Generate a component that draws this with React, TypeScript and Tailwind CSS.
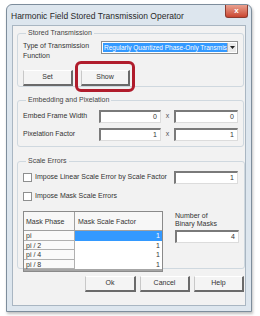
import React from "react";

const font = { fontFamily: '"Liberation Sans", Arial, sans-serif' };

function Btn({ label, className = "" }: { label: string; className?: string }) {
  return (
    <div
      className={
        "h-[16px] flex items-center justify-center text-[7px] text-[#333] bg-[#f4f4f4] border-t border-l border-t-white border-l-[#c8c8c8] border-r-2 border-b-2 border-r-[#6a6a6a] border-b-[#6a6a6a] " +
        className
      }
    >
      {label}
    </div>
  );
}

function Field({ value, className = "" }: { value: string; className?: string }) {
  return (
    <div
      className={
        "h-[13px] bg-white border-t-2 border-l-2 border-t-[#7a7a7a] border-l-[#7a7a7a] border-r border-b border-r-[#dcdcdc] border-b-[#dcdcdc] flex items-center justify-end pr-[3px] text-[7px] text-[#333] " +
        className
      }
    >
      {value}
    </div>
  );
}

function Group({ title, className = "", children }: { title: string; className?: string; children: React.ReactNode }) {
  return (
    <fieldset className={"border border-[#cfd8df] rounded-[3px] mx-[4px] px-[5px] " + className}>
      <legend className="ml-[3px] px-[2px] text-[7px] leading-[10px] text-[#444]">{title}</legend>
      {children}
    </fieldset>
  );
}

function Check({ label }: { label: string }) {
  return (
    <div className="flex items-center gap-[3px] h-[10px]">
      <div className="w-[9px] h-[9px] bg-white border border-[#8e8f8f]" />
      <span className="text-[7px] text-[#333] whitespace-nowrap">{label}</span>
    </div>
  );
}

export default function App() {
  const rows = ["pi", "pi / 2", "pi / 4", "pi / 8"];
  return (
    <div className="w-[260px] h-[316px] bg-white pt-[4px] pl-[6px]" style={font}>
      <div className="w-[246px] h-[308px] border border-[#7d8d9c] rounded-t-[6px] bg-[#dde6ee] flex flex-col shadow-[1px_2px_3px_rgba(0,0,0,0.25)]">
        {/* title bar */}
        <div className="h-[20px] flex items-start pl-[4px] pr-[3px]">
          <span className="mt-[6px] text-[8.5px] text-[#2a2a2a] leading-[10px]">Harmonic Field Stored Transmission Operator</span>
          <div className="ml-auto w-[23px] h-[13px] rounded-b-[3px] bg-gradient-to-b from-[#e9a08f] to-[#c9442f] border border-[#8c3a2e] border-t-0 flex items-center justify-center text-white text-[8px] font-bold leading-none">
            x
          </div>
        </div>

        {/* client area */}
        <div className="mx-[5px] h-[281px] bg-[#f2f2f2] border border-[#a9b6c2] pt-[2px] flex flex-col">
          <Group title="Stored Transmission" className="h-[59px] relative">
            <div className="flex items-start mt-[3px]">
              <div className="w-[78px] text-[7px] leading-[10px] text-[#333]">
                Type of Transmission
                <br />
                Function
              </div>
              <div className="w-[137px] h-[13px] border border-[#8e8f8f] bg-white flex items-center p-[1px]">
                <div className="flex-1 h-full bg-[#3399ff] text-white text-[6.5px] leading-[9px] overflow-hidden whitespace-nowrap pl-[1px]">
                  Regularly Quantized Phase-Only Transmis
                </div>
                <div className="w-[9px] h-full bg-[#eaeaea] border-l border-[#b0b0b0] flex items-center justify-center">
                  <svg width="5" height="3" viewBox="0 0 5 3">
                    <path d="M0 0h5L2.5 3z" fill="#222" />
                  </svg>
                </div>
              </div>
            </div>
            <div className="flex gap-[8px] mt-[9px]">
              <Btn label="Set" className="w-[50px]" />
              <Btn label="Show" className="w-[49px]" />
            </div>
            <div className="absolute left-[57px] top-[23px] w-[60px] h-[31px] border-[3px] border-[#b01c2c] rounded-[6px]" />
          </Group>

          <Group title="Embedding and Pixelation" className="h-[52px] mt-[8px]">
            <div className="flex flex-col gap-[5px] mt-[5px]">
              {[
                ["Embed Frame Width", "0", "0"],
                ["Pixelation Factor", "1", "1"],
              ].map(([l, a, b]) => (
                <div key={l} className="flex items-center h-[13px]">
                  <span className="w-[76px] text-[7px] text-[#333]">{l}</span>
                  <Field value={a} className="w-[62px]" />
                  <span className="w-[13px] text-center text-[7px] text-[#555]">x</span>
                  <Field value={b} className="w-[64px]" />
                </div>
              ))}
            </div>
          </Group>

          <Group title="Scale Errors" className="h-[113px] mt-[9px]">
            <div className="flex items-center mt-[5px] h-[13px]">
              <div className="w-[151px]">
                <Check label="Impose Linear Scale Error by Scale Factor" />
              </div>
              <Field value="1" className="w-[64px]" />
            </div>
            <div className="mt-[7px]">
              <Check label="Impose Mask Scale Errors" />
            </div>
            <div className="flex mt-[10px]">
              <div className="w-[140px] h-[61px] border border-[#8a8a8a] bg-white flex flex-col text-[7px] text-[#333]">
                <div className="flex h-[19px] border-b border-[#a0a0a0] bg-[#f7f7f7]">
                  <div className="w-[51px] border-r border-[#a0a0a0] pl-[2px] pt-[5px]">Mask Phase</div>
                  <div className="flex-1 pl-[3px] pt-[5px]">Mask Scale Factor</div>
                </div>
                {rows.map((r, i) => (
                  <div key={r} className="flex h-[9.5px]">
                    <div className="w-[51px] border-r border-b border-[#b0b0b0] pl-[2px] leading-[9px] bg-[#fafafa]">{r}</div>
                    <div
                      className={
                        "flex-1 text-right pr-[2px] leading-[9px] " +
                        (i === 0 ? "bg-[#3399ff] text-white" : "bg-white")
                      }
                    >
                      1
                    </div>
                  </div>
                ))}
                <div className="flex-1 bg-[#a6a6a6]" />
              </div>
              <div className="ml-[12px] mt-[1px] flex flex-col">
                <span className="text-[7px] leading-[8px] text-[#333]">
                  Number of
                  <br />
                  Binary Masks
                </span>
                <Field value="4" className="w-[64px] mt-[2px]" />
              </div>
            </div>
          </Group>

          <div className="flex justify-end gap-[4px] mr-[1px] mt-[7px]">
            <Btn label="Ok" className="w-[51px]" />
            <Btn label="Cancel" className="w-[50px]" />
            <Btn label="Help" className="w-[50px]" />
          </div>
        </div>
      </div>
    </div>
  );
}
